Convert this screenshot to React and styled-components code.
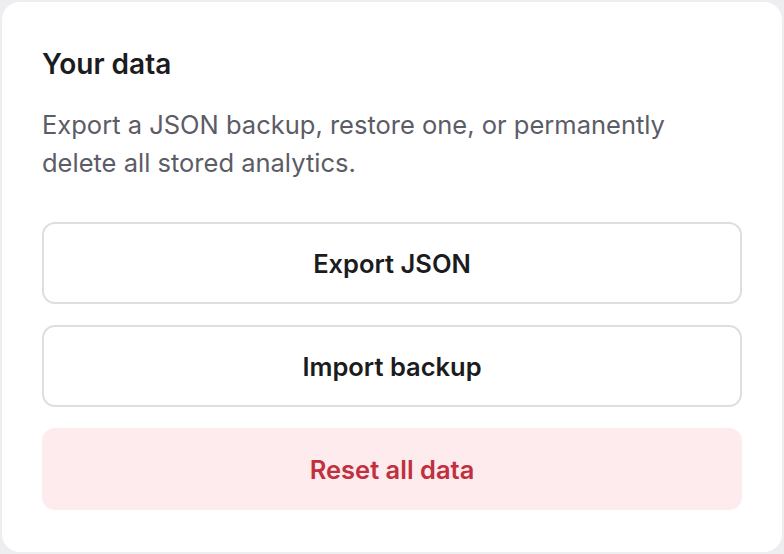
import React from "react";
import styled, { createGlobalStyle } from "styled-components";

const GlobalStyle = createGlobalStyle`
  html, body {
    margin: 0;
    padding: 0;
    background: #eeeef1;
    font-family: Inter, "Noto Sans", "Liberation Sans", sans-serif;
  }
  * {
    box-sizing: border-box;
  }
`;

const Page = styled.div`
  width: 784px;
  height: 554px;
  padding: 2px;
`;

const Card = styled.section`
  height: 100%;
  background: #ffffff;
  border-radius: 18px;
  padding: 45px 40px 40px 40px;
  display: flex;
  flex-direction: column;
`;

const Title = styled.h2`
  margin: 0;
  font-size: 28px;
  line-height: 34px;
  font-weight: 600;
  color: #1b1b20;
`;

const Description = styled.p`
  margin: 25px 0 0;
  font-size: 25.5px;
  line-height: 38px;
  font-weight: 400;
  color: #5c5c66;
`;

const Actions = styled.div`
  margin-top: 40px;
  display: flex;
  flex-direction: column;
  gap: 21px;
`;

const Button = styled.button`
  height: 82px;
  width: 100%;
  border-radius: 13px;
  font-family: inherit;
  font-size: 25.5px;
  font-weight: 600;
  cursor: pointer;
  border: 2px solid ${({ $danger }) => ($danger ? "#fdebed" : "#dedee2")};
  background: ${({ $danger }) => ($danger ? "#fdebed" : "#ffffff")};
  color: ${({ $danger }) => ($danger ? "#c0303f" : "#1b1b20")};
`;

export default function App() {
  return (
    <>
      <GlobalStyle />
      <Page>
        <Card>
          <Title>Your data</Title>
          <Description>
            Export a JSON backup, restore one, or permanently
            <br />
            delete all stored analytics.
          </Description>
          <Actions>
            <Button>Export JSON</Button>
            <Button>Import backup</Button>
            <Button $danger>Reset all data</Button>
          </Actions>
        </Card>
      </Page>
    </>
  );
}
